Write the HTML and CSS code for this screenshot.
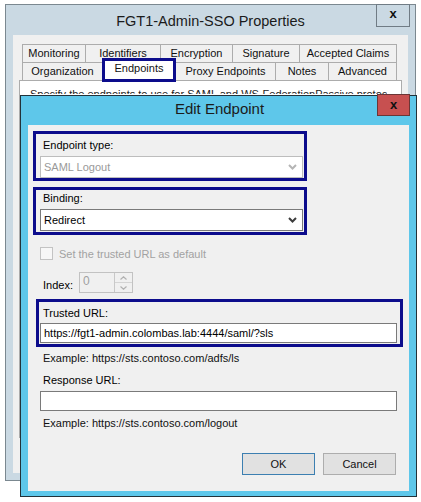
FILE: index.html
```html
<!DOCTYPE html>
<html lang="en">
<head>
  <meta charset="UTF-8">
  <title>FGT1-Admin-SSO Properties</title>
  <link rel="stylesheet" href="styles.css">
</head>
<body>

  <!-- relying party properties window (behind) -->
  <div class="window" id="props">
    <div class="win-title">FGT1-Admin-SSO Properties
      <span class="close">x</span>
    </div>
    <div class="win-body">
      <div class="tabs">
        <div class="tab-row">
          <div class="tab" style="width: 63px">Monitoring</div>
          <div class="tab" style="width: 75px">Identifiers</div>
          <div class="tab" style="width: 72px">Encryption</div>
          <div class="tab" style="width: 67px">Signature</div>
          <div class="tab last" style="width: 98px">Accepted Claims</div>
        </div>
        <div class="tab-row">
          <div class="tab" style="width: 80px">Organization</div>
          <div class="tab selected" style="width: 74px">Endpoints</div>
          <div class="tab" style="width: 99px">Proxy Endpoints</div>
          <div class="tab" style="width: 53px">Notes</div>
          <div class="tab last" style="width: 69px">Advanced</div>
        </div>
      </div>
      <div class="tab-panel">
        <div class="panel-text">Specify the endpoints to use for SAML and WS-FederationPassive protocols.</div>
      </div>
    </div>
  </div>

  <!-- edit endpoint dialog (front) -->
  <div class="window" id="dialog">
    <div class="win-title">Edit Endpoint
      <span class="close red">x</span>
    </div>
    <div class="dlg-body">

      <div class="mark group-type">
        <div class="label">Endpoint type:</div>
        <div class="select disabled">
          <span>SAML Logout</span>
          <svg width="9" height="6" viewBox="0 0 9 6"><polyline points="1,1 4.5,4.5 8,1" fill="none" stroke="#b5b5b5" stroke-width="2"/></svg>
        </div>
      </div>

      <div class="mark group-binding">
        <div class="label">Binding:</div>
        <div class="select">
          <span>Redirect</span>
          <svg width="9" height="6" viewBox="0 0 9 6"><polyline points="1,1 4.5,4.5 8,1" fill="none" stroke="#3c3c3c" stroke-width="2"/></svg>
        </div>
      </div>

      <div class="check-row">
        <div class="checkbox"></div>
        <span>Set the trusted URL as default</span>
      </div>

      <div class="index-row">
        <span class="label">Index:</span>
        <div class="spinner">
          <div class="spin-value">0</div>
          <div class="spin-btns">
            <div class="spin-btn">
              <svg width="7" height="4" viewBox="0 0 7 4"><polyline points="0.5,3.5 3.5,0.8 6.5,3.5" fill="none" stroke="#b0b0b0" stroke-width="1.2"/></svg>
            </div>
            <div class="spin-btn">
              <svg width="7" height="4" viewBox="0 0 7 4"><polyline points="0.5,0.5 3.5,3.2 6.5,0.5" fill="none" stroke="#b0b0b0" stroke-width="1.2"/></svg>
            </div>
          </div>
        </div>
      </div>

      <div class="mark group-url">
        <div class="label">Trusted URL:</div>
        <div class="textbox">https://fgt1-admin.colombas.lab:4444/saml/?sls</div>
      </div>

      <div class="label hint">Example: https://sts.contoso.com/adfs/ls</div>

      <div class="label response-label">Response URL:</div>
      <div class="textbox response"></div>

      <div class="label hint second">Example: https://sts.contoso.com/logout</div>

      <div class="buttons">
        <button class="btn default">OK</button>
        <button class="btn">Cancel</button>
      </div>
    </div>
  </div>

</body>
</html>
```

FILE: styles.css
```css
body {
  margin: 0;
  width: 421px;
  height: 502px;
  position: relative;
  overflow: hidden;
  background: #fff;
  font-family: "Liberation Sans", Arial, sans-serif;
  font-size: 11px;
  color: #000;
}
.window {
  position: absolute;
  box-sizing: border-box;
  display: flex;
  flex-direction: column;
}
.win-title {
  position: relative;
  text-align: center;
  font-size: 15px;
  color: #1b1b1b;
  flex: none;
}
.close {
  position: absolute;
  box-sizing: border-box;
  border: 1px solid #707c85;
  font-size: 13px;
  font-weight: bold;
  line-height: 18px;
  text-align: center;
  color: #111;
}

/* properties window */
#props {
  left: 5px;
  top: 4px;
  width: 411px;
  height: 477px;
  background: #cad9e3;
  border: 1px solid #7b8890;
  padding: 0 7px 7px 7px;
}
#props .win-title {
  height: 30px;
  padding-top: 8px;
  box-sizing: border-box;
  font-size: 14.5px;
}
#props .close {
  left: 363px;
  top: -1px;
  width: 34px;
  height: 23px;
  background: #cad9e3;
}
.win-body {
  flex: 1;
  background: #f0f0f0;
  padding: 9px 6px 35px 6px;
  display: flex;
  flex-direction: column;
}
.tabs {
  margin-left: 3px;
  width: 375px;
  position: relative;
  z-index: 2;
}
.tab-row {
  display: flex;
  height: 18px;
  align-items: flex-end;
}
.tab {
  box-sizing: border-box;
  height: 18px;
  border-top: 1px solid #acacac;
  border-left: 1px solid #acacac;
  background: #f0f0f0;
  text-align: center;
  line-height: 17px;
  color: #111;
}
.tab.last {
  border-right: 1px solid #acacac;
}
.tab.selected {
  height: 24px;
  margin-top: -4px;
  margin-bottom: -2px;
  background: #fff;
  border: 3px solid #0c0c8c;
  line-height: 14px;
  position: relative;
  z-index: 3;
}
.tab.selected + .tab {
  border-left: none;
}
.tab-panel {
  flex: 1;
  background: #fff;
  border: 1px solid #acacac;
  padding: 8px 10px 3px 10px;
  color: #222;
}
/* only the top of this line shows above the dialog */
.panel-text {
  height: 6px;
  width: 357px;
  overflow: hidden;
  white-space: nowrap;
  line-height: 13px;
  margin-top: -1px;
}

/* edit endpoint dialog */
#dialog {
  left: 20px;
  top: 95px;
  width: 397px;
  height: 402px;
  background: #5ec7ea;
  border: 1px solid #22323a;
  padding: 0 7px 5px 7px;
  z-index: 5;
}
#dialog .win-title {
  height: 29px;
  line-height: 26px;
  padding-left: 2px;
}
#dialog .close.red {
  left: 349px;
  top: -2px;
  width: 33px;
  height: 22px;
  background: #c75050;
  border-color: #6b3636;
  line-height: 19px;
}
.dlg-body {
  flex: 1;
  background: #f0f0f0;
  display: flex;
  flex-direction: column;
  align-items: flex-start;
}
.label {
  line-height: 16px;
  padding-left: 3px;
}
.mark {
  border: 3px solid #0c0c8c;
  box-sizing: border-box;
}
.group-type {
  margin: 6px 0 0 5px;
  width: 274px;
  padding: 3px 2px 0 4px;
}
.group-binding {
  margin: 6px 0 0 5px;
  width: 274px;
  padding: 0 2px 1px 4px;
}
.select {
  box-sizing: border-box;
  width: 263px;
  height: 22px;
  margin-top: 3px;
  border: 1px solid #7a7a7a;
  background: #fff;
  display: flex;
  align-items: center;
  justify-content: space-between;
  padding: 0 5px 0 3px;
}
.select.disabled {
  border-color: #bdbdbd;
  color: #9a9a9a;
}
.check-row {
  margin: 12px 0 0 12px;
  height: 13px;
  display: flex;
  align-items: center;
  gap: 6px;
  color: #a2a2a2;
}
.checkbox {
  width: 13px;
  height: 13px;
  box-sizing: border-box;
  border: 1px solid #c3c3c3;
  background: #f7f7f7;
}
.index-row {
  margin: 12px 0 0 12px;
  height: 21px;
  display: flex;
  align-items: center;
}
.index-row .label {
  width: 36px;
  padding-top: 4px;
}
.spinner {
  display: flex;
  box-sizing: border-box;
  width: 54px;
  height: 21px;
  border: 1px solid #c2c2c2;
  background: #f0f0f0;
}
.spin-value {
  flex: 1;
  color: #a0a0a0;
  padding: 1px 0 0 3px;
  font-size: 12px;
  line-height: 14px;
}
.spin-btns {
  width: 17px;
  display: flex;
  flex-direction: column;
  border-left: 1px solid #c8c8c8;
}
.spin-btn {
  flex: 1;
  display: flex;
  align-items: center;
  justify-content: center;
  border-bottom: 1px solid #d4d4d4;
}
.spin-btn:last-child {
  border-bottom: none;
}
.group-url {
  margin: 6px 0 0 8px;
  width: 367px;
  padding: 3px 3px 1px 1px;
}
.textbox {
  box-sizing: border-box;
  width: 357px;
  height: 20px;
  margin-top: 2px;
  border: 1px solid #7a7a7a;
  background: #fff;
  padding: 0 3px;
  line-height: 18px;
}
.hint {
  margin: 3px 0 0 12px;
  color: #111;
}
.hint.second {
  margin-top: 4px;
}
.response-label {
  margin: 6px 0 0 12px;
}
.textbox.response {
  margin: 3px 0 0 12px;
  width: 357px;
  height: 20px;
}
.buttons {
  align-self: stretch;
  display: flex;
  justify-content: flex-end;
  gap: 8px;
  margin-top: 22px;
  padding-right: 13px;
}
.btn {
  width: 73px;
  height: 22px;
  font-family: "Liberation Sans", Arial, sans-serif;
  font-size: 11px;
  background: #e1e1e1;
  border: 1px solid #adadad;
  color: #111;
  padding: 0;
}
.btn.default {
  border-color: #3c7fb1;
}
```
